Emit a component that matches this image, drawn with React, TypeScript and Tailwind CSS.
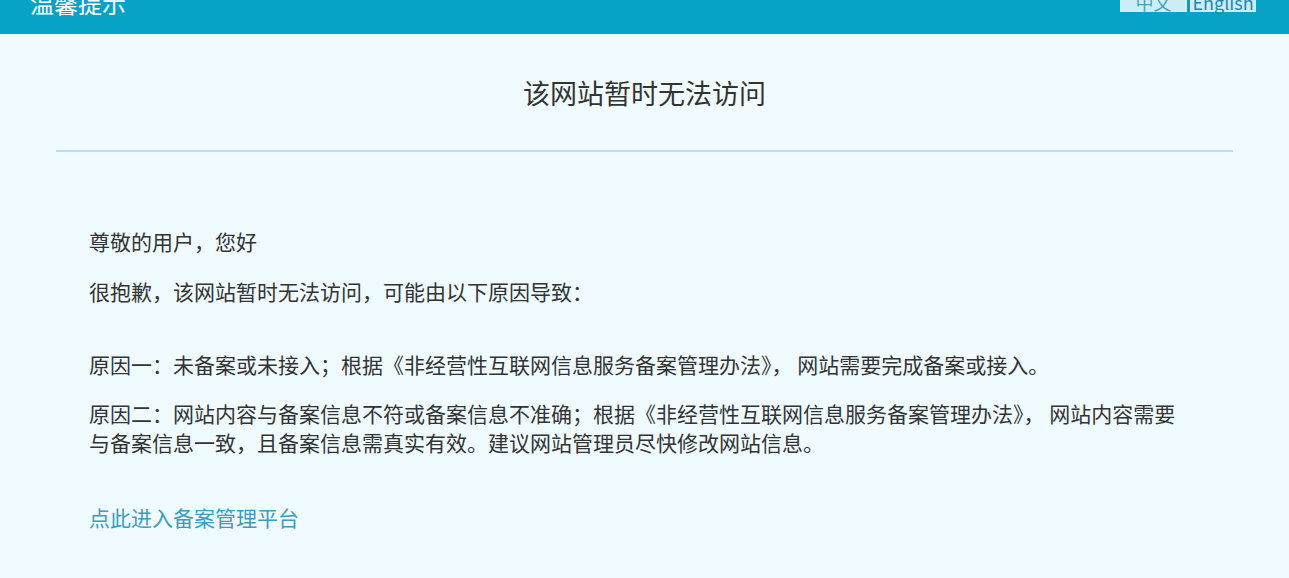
export default function App() {
  const cjk = { fontFamily: '"Noto Sans CJK SC", "Microsoft YaHei", sans-serif' };

  return (
    <div className="min-h-[578px] bg-[#effbfe] overflow-hidden text-[#333]" style={cjk}>
      {/* header bar, page is scrolled a little so its top is cut off */}
      <div className="-mt-[16px] h-[50px] bg-[#06a3c7] flex items-start justify-between">
        <h1 className="ml-[30px] mt-[7px] text-[24px] leading-[24px] text-white">温馨提示</h1>
        <div className="mr-[33px] mt-[8px] flex h-[20px]">
          <span className="w-[67px] h-full bg-[#cdeef6] text-[#4b9fbe] text-[18px] leading-[20px] text-center">中文</span>
          <span className="ml-[1px] w-[68px] h-full bg-[#cdeef6] border-l-2 border-[#2a8db3] text-[#2386b0] text-[18px] leading-[20px] text-center">English</span>
        </div>
      </div>

      <div className="mx-[56px]">
        <h2 className="pt-[39px] h-[79px] text-center text-[27px] leading-[40px] text-[#333]">该网站暂时无法访问</h2>
        <div className="mt-[37px] h-[2px] bg-[#b5e1ea]" />

        <div className="pl-[33px] pt-[75px] w-[1128px] text-[21px] leading-[29px]">
          <p>尊敬的用户，您好</p>
          <p className="mt-[21px]">很抱歉，该网站暂时无法访问，可能由以下原因导致：</p>
          <p className="mt-[44px]">原因一：未备案或未接入；根据《非经营性互联网信息服务备案管理办法》， 网站需要完成备案或接入。</p>
          <p className="mt-[20px]">
            原因二：网站内容与备案信息不符或备案信息不准确；根据《非经营性互联网信息服务备案管理办法》， 网站内容需要与备案信息一致，且备案信息需真实有效。建议网站管理员尽快修改网站信息。
          </p>
          <p className="mt-[46px]">
            <a href="#" className="text-[#3d9bbb]">点此进入备案管理平台</a>
          </p>
        </div>
      </div>
    </div>
  );
}
